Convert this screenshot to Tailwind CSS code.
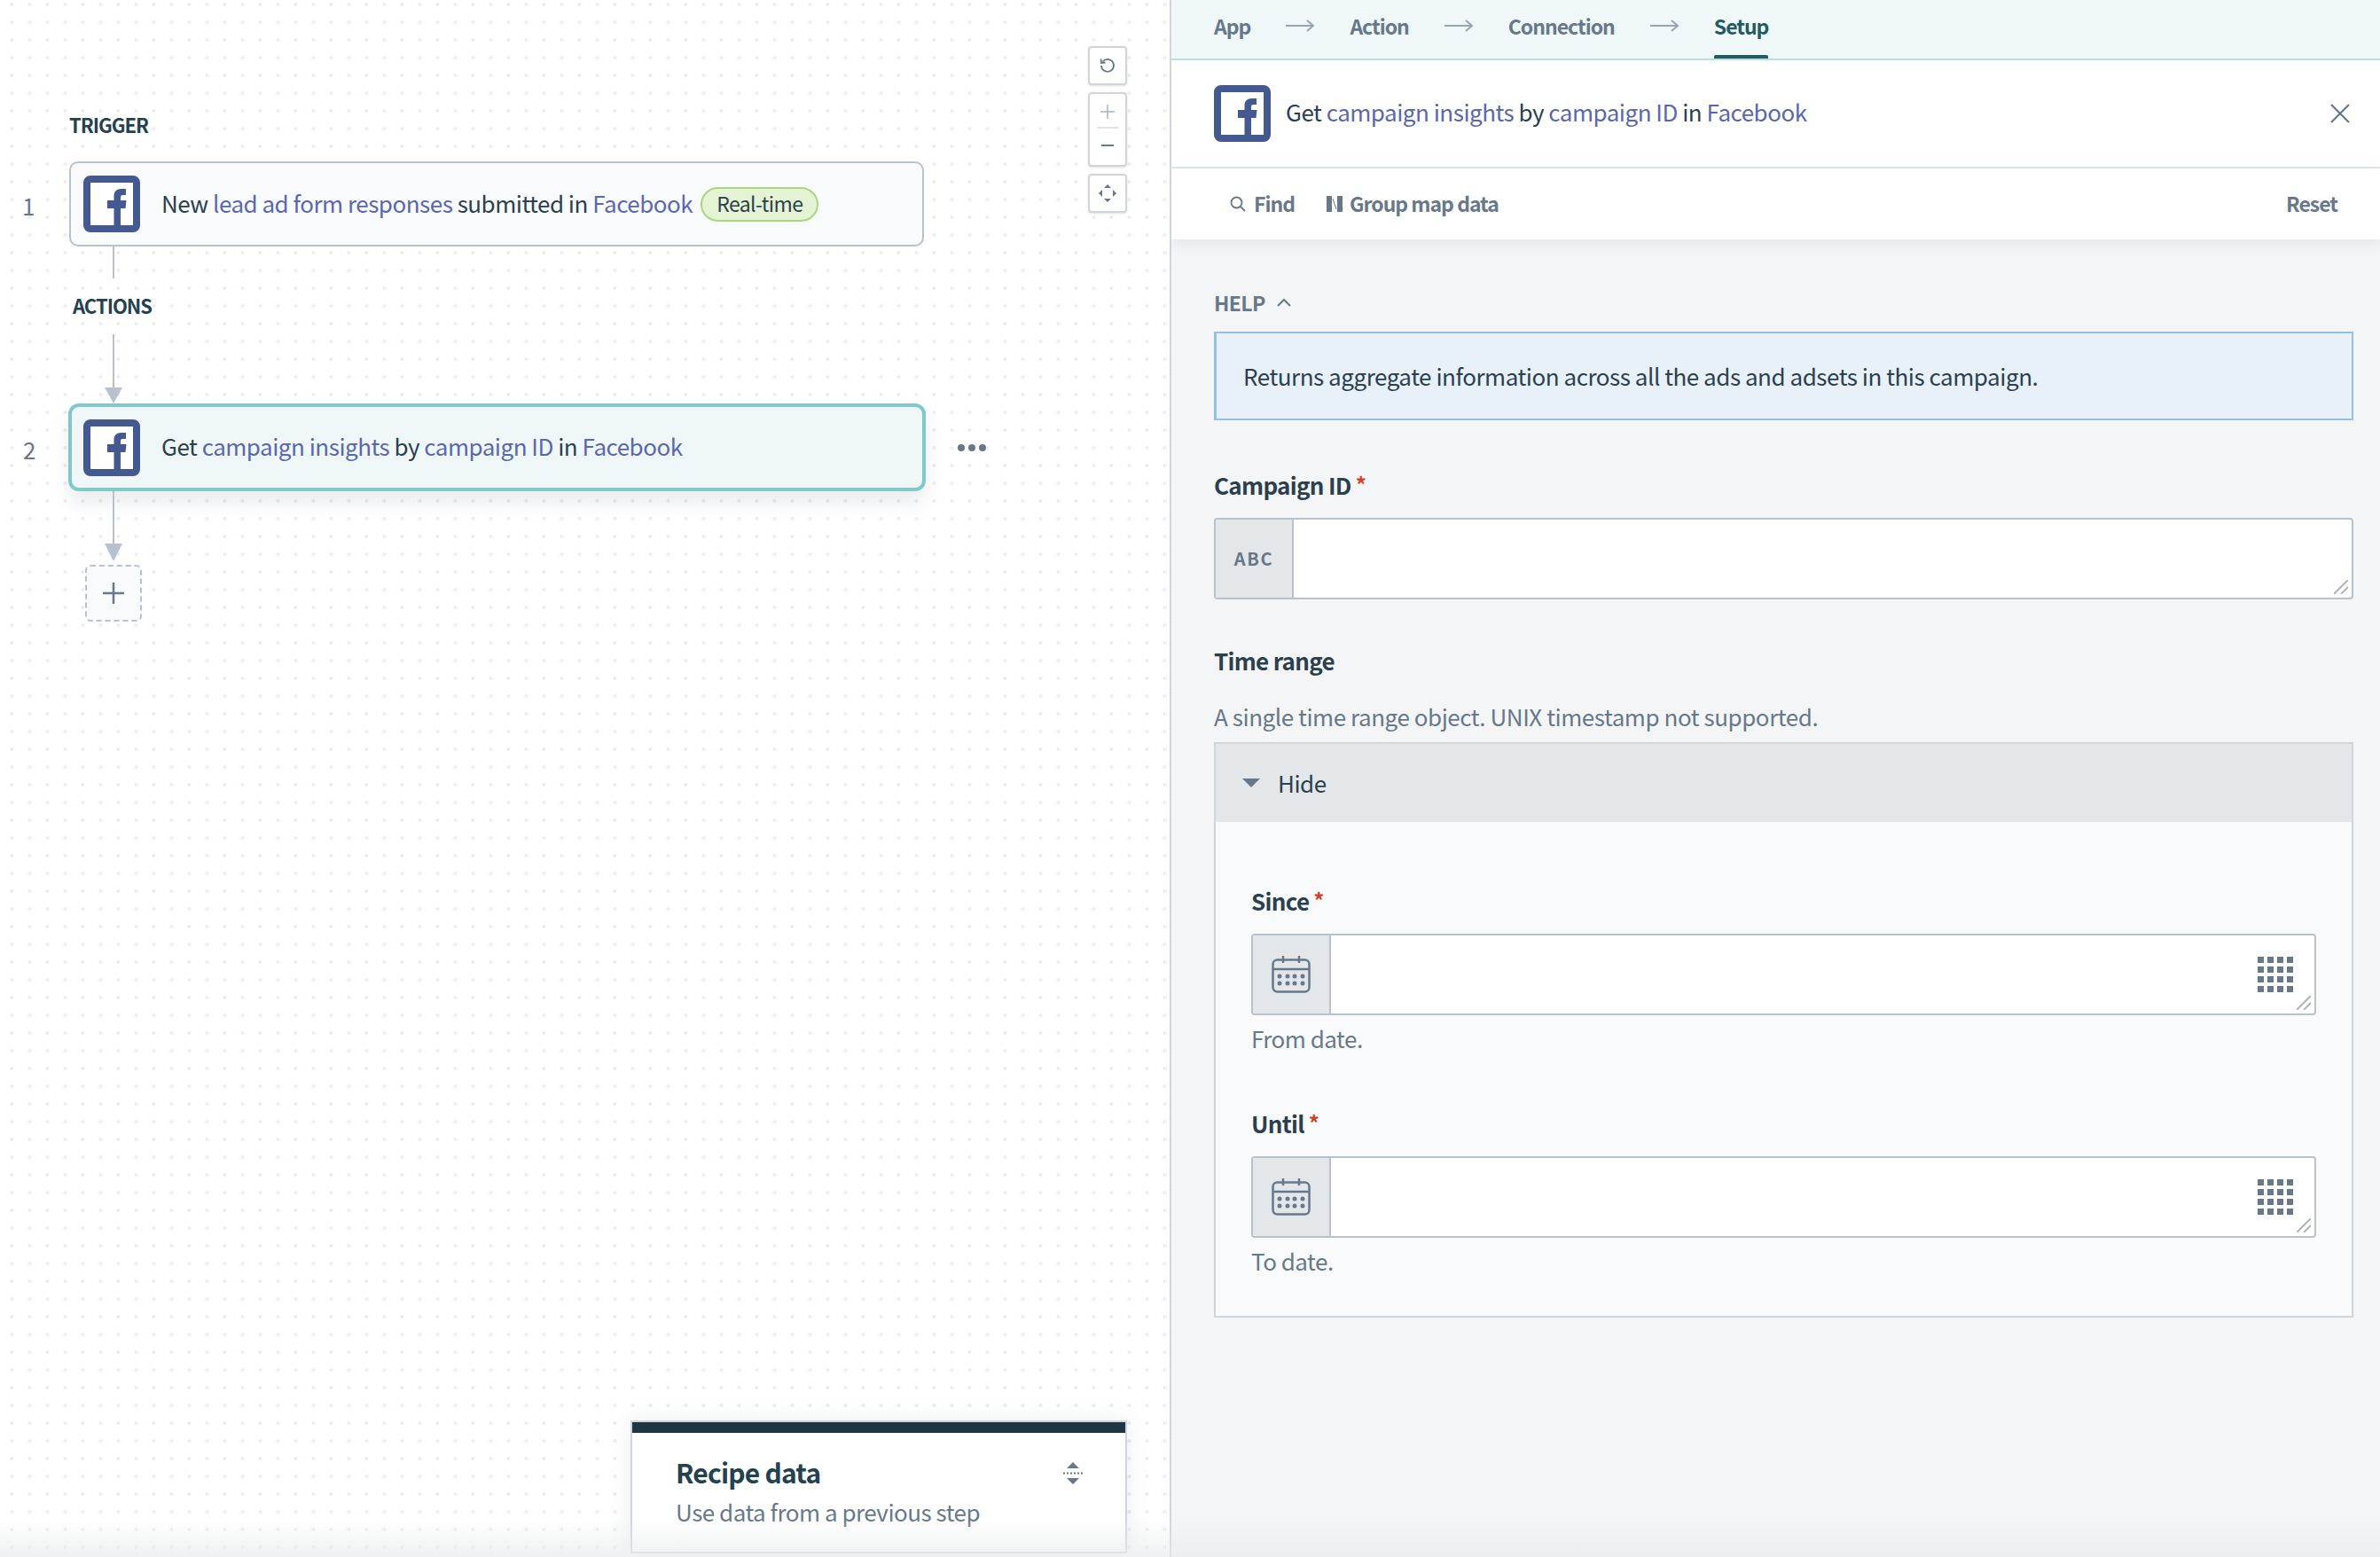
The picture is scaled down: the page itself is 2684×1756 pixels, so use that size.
<!DOCTYPE html>
<html>
<head>
  <meta charset="UTF-8">
  <title>Recipe step setup</title>
  <script src="https://cdn.jsdelivr.net/npm/@tailwindcss/browser@4"></script>
</head>
<body class="bg-white">
  <div class="relative flex w-[2684px] h-[1756px] overflow-hidden font-['Noto_Sans_CJK_SC','Noto_Sans',sans-serif] text-[#2b3f4f] text-[26px] tracking-[-0.5px]">

    <!-- canvas -->
    <div class="relative w-[1321px] shrink-0 h-full border-r-[2px] border-[#cfd5db] bg-white bg-[radial-gradient(circle,#e9ebee_1.5px,transparent_2.2px)] bg-[size:20px_20px] bg-[position:3.5px_-5px]">
      <div class="flex flex-col pt-[122px]">
        <div class="pl-[78px] h-[60px] text-[22px] leading-[37px] tracking-[-1px] font-semibold text-[#24414f]">TRIGGER</div>

        <div class="flex items-center">
          <div class="w-[78px] pl-[25px] pt-[3px] text-[26px] text-[#67788a]">1</div>
          <div class="flex items-center w-[964px] h-[96px] pl-[14px] rounded-[10px] border-2 border-[#b8c2cc] bg-[#f9fafc]">
            <svg class="shrink-0" width="64" height="64" viewBox="0 0 64 64"><rect x="4" y="4" width="56" height="56" rx="4" fill="#fff" stroke="#44598f" stroke-width="8"/><path d="M34.500 56V37H27v-9h7.500v-5c0-5 3-8 8-8H48v7h-3.500c-2 0-2.500 1-2.500 3v3h6.500l-1 9H42v19z" fill="#44598f"/></svg>
            <div class="ml-[24px] pb-[4px] whitespace-nowrap">New <span class="text-[#5a67b0]">lead ad form responses</span> submitted in <span class="text-[#5a67b0]">Facebook</span></div>
            <div class="ml-[9px] h-[39px] px-[16px] flex items-center rounded-full border-2 border-[#a8d77c] bg-[#e4f3d4] text-[23px] tracking-[-0.6px] text-[#2b3f4f]"><span class="pb-[2px]">Real-time</span></div>
          </div>
        </div>

        <div class="ml-[127px] w-[2px] h-[36px] bg-[#b8c2cc]"></div>
        <div class="pl-[82px] h-[63px] text-[22px] leading-[60px] tracking-[-1px] font-semibold text-[#24414f]">ACTIONS</div>
        <div class="ml-[127px] w-[2px] h-[60px] bg-[#b8c2cc]"></div>
        <svg class="ml-[118px]" width="20" height="18" viewBox="0 0 20 18"><path d="M0 0h20L10 18z" fill="#b8c2cc"/></svg>

        <div class="flex items-center">
          <div class="w-[77px] pl-[26px] pt-[4px] text-[26px] text-[#67788a]">2</div>
          <div class="flex items-center w-[967px] h-[99px] pl-[13px] rounded-[12px] border-4 border-[#81c8ca] bg-[#eff7f9] shadow-[0_14px_20px_rgba(60,80,100,0.10)]">
            <svg class="shrink-0" width="64" height="64" viewBox="0 0 64 64"><rect x="4" y="4" width="56" height="56" rx="4" fill="#fff" stroke="#44598f" stroke-width="8"/><path d="M34.500 56V37H27v-9h7.500v-5c0-5 3-8 8-8H48v7h-3.500c-2 0-2.500 1-2.500 3v3h6.500l-1 9H42v19z" fill="#44598f"/></svg>
            <div class="ml-[24px] pb-[5px] whitespace-nowrap">Get <span class="text-[#5a67b0]">campaign insights</span> by <span class="text-[#5a67b0]">campaign ID</span> in <span class="text-[#5a67b0]">Facebook</span></div>
          </div>
          <div class="flex gap-[4px] ml-[36px]">
            <span class="w-[8px] h-[8px] rounded-full bg-[#67788a]"></span>
            <span class="w-[8px] h-[8px] rounded-full bg-[#67788a]"></span>
            <span class="w-[8px] h-[8px] rounded-full bg-[#67788a]"></span>
          </div>
        </div>

        <div class="ml-[127px] w-[2px] h-[59px] bg-[#b8c2cc]"></div>
        <svg class="ml-[118px]" width="20" height="20" viewBox="0 0 20 20"><path d="M0 0h20L10 20z" fill="#b8c2cc"/></svg>
        <div class="ml-[96px] mt-[4px] w-[64px] h-[64px] flex items-center justify-center rounded-[6px] border-2 border-dashed border-[#b8c2cc] bg-[#f9fafc]">
          <svg width="24" height="24" viewBox="0 0 24 24"><path d="M12 0v24M0 12h24" stroke="#67788a" stroke-width="2.500"/></svg>
        </div>
      </div>

      <!-- zoom controls -->
      <div class="absolute left-[1227px] top-[52px] flex flex-col gap-[8px] w-[44px]">
        <div class="h-[44px] flex items-center justify-center rounded-[4px] border-2 border-[#d0d5dc] bg-white shadow-sm">
          <svg width="18" height="18" viewBox="0 0 18 18" fill="none"><path d="M3.500 4.500A7 7 0 1 1 2 9" stroke="#67788a" stroke-width="1.800"/><path d="M1.500 1.500l.5 4.500 4.500-.5" stroke="#67788a" stroke-width="1.800"/></svg>
        </div>
        <div class="h-[84px] flex flex-col items-center rounded-[4px] border-2 border-[#d0d5dc] bg-white shadow-sm">
          <svg class="mt-[12px]" width="16" height="16" viewBox="0 0 16 16"><path d="M8 0v16M0 8h16" stroke="#a9b4bf" stroke-width="1.500"/></svg>
          <div class="mt-[9px] w-[24px] h-[2px] bg-[#dfe3e8]"></div>
          <svg class="mt-[12px]" width="14" height="14" viewBox="0 0 14 14"><path d="M0 7h14" stroke="#67788a" stroke-width="2"/></svg>
        </div>
        <div class="h-[44px] flex items-center justify-center rounded-[4px] border-2 border-[#d0d5dc] bg-white shadow-sm">
          <svg width="24" height="24" viewBox="0 0 24 24" fill="#67788a"><path d="M12 2l4 4H8zM12 22l-4-4h8zM2 12l4-4v8zM22 12l-4 4V8z"/></svg>
        </div>
      </div>

      <!-- recipe data -->
      <div class="absolute left-[711px] top-[1602px] w-[560px] h-[150px] border-2 border-[#cfd5db] bg-white shadow-[0_0_24px_rgba(60,80,100,0.10)]">
        <div class="h-[12px] bg-[#1e3544]"></div>
        <div class="flex justify-between pl-[49px] pr-[48px] pt-[21px]">
          <div>
            <div class="text-[30px] leading-[47px] tracking-[-0.8px] font-bold text-[#24414f]">Recipe data</div>
            <div class="leading-[41px] text-[#67788a]">Use data from a previous step</div>
          </div>
          <svg class="mt-[12px]" width="22" height="25" viewBox="0 0 22 25" fill="#67788a"><path d="M11 0l7 7H4zM11 25l-7-7h14z"/><path d="M0 12.500h22" stroke="#67788a" stroke-width="2" stroke-dasharray="2 2"/></svg>
        </div>
      </div>
    </div>

    <!-- setup panel -->
    <div class="flex flex-col flex-1 min-w-0 bg-[#f4f5f7]">
      <div class="flex items-center h-[68px] pl-[48px] pb-[8px] border-b-2 border-[#b5e0e2] bg-[#eff7f9] text-[23px] tracking-[-1px] font-semibold text-[#67788a]">
        <span>App</span>
        <svg class="mx-[40px]" width="32" height="14" viewBox="0 0 32 14" fill="none"><path d="M0 7h31M24 1l7 6-7 6" stroke="#98a5b1" stroke-width="2"/></svg>
        <span>Action</span>
        <svg class="mx-[40px]" width="32" height="14" viewBox="0 0 32 14" fill="none"><path d="M0 7h31M24 1l7 6-7 6" stroke="#98a5b1" stroke-width="2"/></svg>
        <span>Connection</span>
        <svg class="mx-[40px]" width="32" height="14" viewBox="0 0 32 14" fill="none"><path d="M0 7h31M24 1l7 6-7 6" stroke="#98a5b1" stroke-width="2"/></svg>
        <span class="relative flex items-center h-full text-[#235b60]">Setup<span class="absolute left-0 right-0 bottom-[-8px] h-[4px] rounded-t-[2px] bg-[#235b60]"></span></span>
      </div>

      <div class="flex items-center justify-between h-[122px] pl-[48px] pr-[34px] border-b-2 border-[#e2e7ec] bg-white">
        <div class="flex items-center">
          <svg class="shrink-0" width="64" height="64" viewBox="0 0 64 64"><rect x="4" y="4" width="56" height="56" rx="4" fill="#fff" stroke="#44598f" stroke-width="8"/><path d="M34.500 56V37H27v-9h7.500v-5c0-5 3-8 8-8H48v7h-3.500c-2 0-2.500 1-2.500 3v3h6.500l-1 9H42v19z" fill="#44598f"/></svg>
          <div class="ml-[17px] pb-[5px] whitespace-nowrap">Get <span class="text-[#5a67b0]">campaign insights</span> by <span class="text-[#5a67b0]">campaign ID</span> in <span class="text-[#5a67b0]">Facebook</span></div>
        </div>
        <svg width="22" height="22" viewBox="0 0 22 22"><path d="M1 1l20 20M21 1L1 21" stroke="#67788a" stroke-width="2.200"/></svg>
      </div>

      <div class="flex items-center justify-between h-[80px] pl-[66px] pr-[48px] bg-white shadow-[0_4px_14px_rgba(60,80,100,0.10)] text-[23px] tracking-[-1px] font-semibold text-[#67788a]">
        <div class="flex items-center">
          <svg width="18" height="18" viewBox="0 0 18 18" fill="none"><circle cx="7.500" cy="7.500" r="6" stroke="#67788a" stroke-width="1.800"/><path d="M12 12l5 5" stroke="#67788a" stroke-width="1.800"/></svg>
          <span class="ml-[9px] pb-[2px]">Find</span>
          <svg class="ml-[36px]" width="18" height="18" viewBox="0 0 18 18" fill="#67788a"><path d="M0 0h6v18H0zM12 0h6v18h-6z"/><path d="M7 3l4 12" stroke="#67788a" stroke-width="1"/></svg>
          <span class="ml-[8px] pb-[2px]">Group map data</span>
        </div>
        <span class="pb-[2px]">Reset</span>
      </div>

      <div class="flex flex-col pl-[48px] pr-[30px] pt-[55px]">
        <div class="flex items-center h-[32px] text-[23px] tracking-[-0.6px] font-semibold text-[#67788a]">
          HELP
          <svg class="ml-[13px]" width="16" height="10" viewBox="0 0 16 10" fill="none"><path d="M1 9l7-7 7 7" stroke="#67788a" stroke-width="2"/></svg>
        </div>
        <div class="flex items-center h-[100px] mt-[17px] pl-[30px] pb-[2px] border-2 border-l-[3px] border-[#93c0ea] bg-[#e8f1f9] tracking-[-0.47px]">Returns aggregate information across all the ads and adsets in this campaign.</div>

        <div class="mt-[52px] h-[42px] leading-[42px] font-semibold tracking-[-0.7px]">Campaign ID<span class="ml-[5px] align-[2px] text-[24px] leading-none text-[#d2402a]">*</span></div>
        <div class="flex relative h-[92px] mt-[16px] rounded-[4px] border-2 border-[#b8c2cc] bg-white overflow-hidden">
          <div class="flex items-center justify-center w-[88px] border-r-2 border-[#b8c2cc] bg-[#e4e7ea] text-[20px] font-semibold tracking-[0.08em] text-[#67788a]">ABC</div>
          <svg class="absolute right-[4px] bottom-[4px]" width="16" height="16" viewBox="0 0 16 16"><path d="M0 16L16 0M8 16l8-8" stroke="#aeb4ba" stroke-width="2"/></svg>
        </div>

        <div class="mt-[48px] h-[42px] leading-[42px] font-semibold tracking-[-0.7px]">Time range</div>
        <div class="mt-[21px] h-[42px] leading-[42px] text-[#67788a] tracking-[-0.45px]">A single time range object. UNIX timestamp not supported.</div>

        <div class="flex flex-col h-[649px] mt-[8px] border-2 border-[#ced5dc] bg-[#f9fafc]">
          <div class="flex items-center h-[88px] pl-[29px] bg-[#e4e7ea]">
            <svg class="ml-[1px]" width="20" height="10" viewBox="0 0 20 10"><path d="M0 0h20L10 10z" fill="#67788a"/></svg>
            <span class="ml-[20px] pb-[2px]">Hide</span>
          </div>

          <div class="flex flex-col pl-[40px] pr-[40px] pt-[68px]">
            <div class="h-[42px] leading-[42px] font-semibold tracking-[-0.7px]">Since<span class="ml-[5px] align-[2px] text-[24px] leading-none text-[#d2402a]">*</span></div>
            <div class="flex relative h-[92px] mt-[16px] rounded-[4px] border-2 border-[#b8c2cc] bg-white overflow-hidden">
              <div class="flex items-center justify-center w-[88px] border-r-2 border-[#b8c2cc] bg-[#e4e7ea]">
                <svg width="44" height="42" viewBox="0 0 44 42" fill="none"><rect x="1.500" y="4.500" width="41" height="36" rx="5" stroke="#67788a" stroke-width="2.500"/><path d="M1.500 15h41M13 0v8M31 0v8" stroke="#67788a" stroke-width="2.500"/><g fill="#67788a"><circle cx="9" cy="23" r="2.500"/><circle cx="18" cy="23" r="2.500"/><circle cx="26" cy="23" r="2.500"/><circle cx="35" cy="23" r="2.500"/><circle cx="9" cy="31" r="2.500"/><circle cx="18" cy="31" r="2.500"/><circle cx="26" cy="31" r="2.500"/><circle cx="35" cy="31" r="2.500"/></g></svg>
              </div>
              <svg class="absolute right-[24px] top-[24px]" width="40" height="40" viewBox="0 0 40 40" fill="#67788a"><path d="M0 0h7v7H0zM11 0h7v7h-7zM22 0h7v7h-7zM33 0h7v7h-7zM0 11h7v7H0zM11 11h7v7h-7zM22 11h7v7h-7zM33 11h7v7h-7zM0 22h7v7H0zM11 22h7v7h-7zM22 22h7v7h-7zM33 22h7v7h-7zM0 33h7v7H0zM11 33h7v7h-7zM22 33h7v7h-7zM33 33h7v7h-7z"/></svg>
              <svg class="absolute right-[4px] bottom-[4px]" width="16" height="16" viewBox="0 0 16 16"><path d="M0 16L16 0M8 16l8-8" stroke="#aeb4ba" stroke-width="2"/></svg>
            </div>
            <div class="h-[42px] mt-[5px] leading-[42px] text-[#67788a]">From date.</div>

            <div class="h-[42px] mt-[54px] leading-[42px] font-semibold tracking-[-0.7px]">Until<span class="ml-[5px] align-[2px] text-[24px] leading-none text-[#d2402a]">*</span></div>
            <div class="flex relative h-[92px] mt-[16px] rounded-[4px] border-2 border-[#b8c2cc] bg-white overflow-hidden">
              <div class="flex items-center justify-center w-[88px] border-r-2 border-[#b8c2cc] bg-[#e4e7ea]">
                <svg width="44" height="42" viewBox="0 0 44 42" fill="none"><rect x="1.500" y="4.500" width="41" height="36" rx="5" stroke="#67788a" stroke-width="2.500"/><path d="M1.500 15h41M13 0v8M31 0v8" stroke="#67788a" stroke-width="2.500"/><g fill="#67788a"><circle cx="9" cy="23" r="2.500"/><circle cx="18" cy="23" r="2.500"/><circle cx="26" cy="23" r="2.500"/><circle cx="35" cy="23" r="2.500"/><circle cx="9" cy="31" r="2.500"/><circle cx="18" cy="31" r="2.500"/><circle cx="26" cy="31" r="2.500"/><circle cx="35" cy="31" r="2.500"/></g></svg>
              </div>
              <svg class="absolute right-[24px] top-[24px]" width="40" height="40" viewBox="0 0 40 40" fill="#67788a"><path d="M0 0h7v7H0zM11 0h7v7h-7zM22 0h7v7h-7zM33 0h7v7h-7zM0 11h7v7H0zM11 11h7v7h-7zM22 11h7v7h-7zM33 11h7v7h-7zM0 22h7v7H0zM11 22h7v7h-7zM22 22h7v7h-7zM33 22h7v7h-7z M0 33h7v7H0zM11 33h7v7h-7zM22 33h7v7h-7zM33 33h7v7h-7z"/></svg>
              <svg class="absolute right-[4px] bottom-[4px]" width="16" height="16" viewBox="0 0 16 16"><path d="M0 16L16 0M8 16l8-8" stroke="#aeb4ba" stroke-width="2"/></svg>
            </div>
            <div class="h-[42px] mt-[5px] leading-[42px] text-[#67788a]">To date.</div>
          </div>
        </div>
      </div>
    </div>

    <!-- fade at the window bottom -->
    <div class="absolute left-0 right-0 bottom-0 h-[44px] bg-gradient-to-b from-transparent to-[#e9ebec]/70 pointer-events-none"></div>
  </div>
</body>
</html>
